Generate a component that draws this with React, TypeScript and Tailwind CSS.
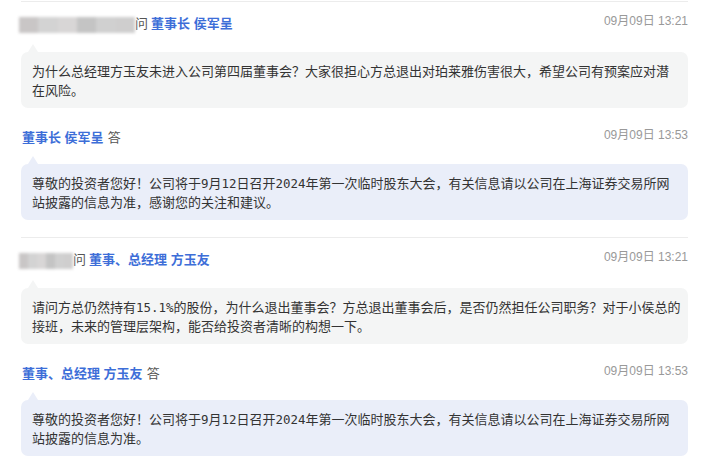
import React from 'react';

// ─── Investor Q&A thread ─────────────────────────────────────────────
// Question bubble (gray) then answer bubble (pale blue), each under a
// small header line: asker / answerer name on the left, time on the right.

interface QA {
  askerWidth: string;
  askTo: string;
  askTime: string;
  question: string;
  answerBy: string;
  answerTime: string;
  answer: string;
}

const HEAD = "font-['Liberation_Sans','Noto_Sans_CJK_SC',sans-serif]";

const items: QA[] = [
  {
    askerWidth: 'w-[116px]',
    askTo: '董事长 侯军呈',
    askTime: '09月09日 13:21',
    question:
      '为什么总经理方玉友未进入公司第四届董事会？大家很担心方总退出对珀莱雅伤害很大，希望公司有预案应对潜在风险。',
    answerBy: '董事长 侯军呈',
    answerTime: '09月09日 13:53',
    answer:
      '尊敬的投资者您好！公司将于9月12日召开2024年第一次临时股东大会，有关信息请以公司在上海证券交易所网站披露的信息为准，感谢您的关注和建议。',
  },
  {
    askerWidth: 'w-[54px]',
    askTo: '董事、总经理 方玉友',
    askTime: '09月09日 13:21',
    question:
      '请问方总仍然持有15.1%的股份，为什么退出董事会？方总退出董事会后，是否仍然担任公司职务？对于小侯总的接班，未来的管理层架构，能否给投资者清晰的构想一下。',
    answerBy: '董事、总经理 方玉友',
    answerTime: '09月09日 13:53',
    answer:
      '尊敬的投资者您好！公司将于9月12日召开2024年第一次临时股东大会，有关信息请以公司在上海证券交易所网站披露的信息为准。',
  },
];

// Latin runs (dates, percentages) are set in a monospace face, as on the site.
const Rich: React.FC<{ text: string }> = ({ text }) => (
  <>
    {text.split(/([\x20-\x7e]+)/).map((part, i) =>
      /^[\x20-\x7e]+$/.test(part) ? (
        <span key={i} className="font-['DejaVu_Sans_Mono',monospace] text-[12.45px] leading-[10px]">
          {part}
        </span>
      ) : (
        <React.Fragment key={i}>{part}</React.Fragment>
      ),
    )}
  </>
);

const Blurred: React.FC<{ width: string }> = ({ width }) => (
  <span className={`relative inline-flex h-[16px] ${width} mt-[2px] blur-[1.5px] overflow-hidden`}>
    <span className="flex-1 bg-[#c9c6c6]" />
    <span className="flex-1 bg-[#d3d3d3]" />
    <span className="flex-1 bg-[#d8d6d6]" />
    <span className="flex-1 bg-[#c4c4c4]" />
    <span className="flex-1 bg-[#d0d0d0]" />
    <span className="flex-1 bg-[#cfcece]" />
  </span>
);

const Bubble: React.FC<{ tone: 'q' | 'a'; text: string }> = ({ tone, text }) => {
  const bg = tone === 'q' ? 'bg-[#f4f5f5]' : 'bg-[#eaeef9]';
  const tip = tone === 'q' ? 'border-b-[#f4f5f5]' : 'border-b-[#eaeef9]';
  return (
    <div className={`relative rounded-[7px] ${bg} pl-[11px] pr-[7px] py-[9px]`}>
      <span
        className={`absolute left-[7px] top-[-8px] w-0 h-0 border-x-[5px] border-x-transparent border-b-[8px] ${tip}`}
      />
      <p className="font-['Noto_Sans_CJK_SC',sans-serif] text-[13px] leading-[19px] text-[#333]">
        <Rich text={text} />
      </p>
    </div>
  );
};

const Item: React.FC<{ qa: QA }> = ({ qa }) => (
  <div className="border-t border-[#ececec] pt-[10px] pb-[17px]">
    <div className="flex items-start justify-between h-[20px]">
      <div className="flex items-center -ml-[2px] mt-[2px]">
        <Blurred width={qa.askerWidth} />
        <span className={`${HEAD} text-[13px] text-[#555]`}>问</span>
        <span className={`${HEAD} text-[13px] font-semibold text-[#3d6ed8] ml-[3px]`}>{qa.askTo}</span>
      </div>
      <span className={`${HEAD} text-[12px] text-[#999] leading-[16px] mt-[1px]`}>{qa.askTime}</span>
    </div>

    <div className="mt-[20px]">
      <Bubble tone="q" text={qa.question} />
    </div>

    <div className="flex items-start justify-between h-[20px] mt-[18px]">
      <div className="flex items-center mt-[2px]">
        <span className={`${HEAD} text-[13px] font-semibold text-[#3d6ed8] ml-[1px]`}>{qa.answerBy}</span>
        <span className={`${HEAD} text-[13px] text-[#555] ml-[4px]`}>答</span>
      </div>
      <span className={`${HEAD} text-[12px] text-[#999] leading-[16px] mt-[1px]`}>{qa.answerTime}</span>
    </div>

    <div className="mt-[18px]">
      <Bubble tone="a" text={qa.answer} />
    </div>
  </div>
);

export default function App() {
  return (
    <div className="w-[706px] h-[467px] bg-white overflow-hidden">
      <div className="ml-[21px] w-[667px] pt-[1px]">
        {items.map((qa, i) => (
          <Item key={i} qa={qa} />
        ))}
      </div>
    </div>
  );
}
